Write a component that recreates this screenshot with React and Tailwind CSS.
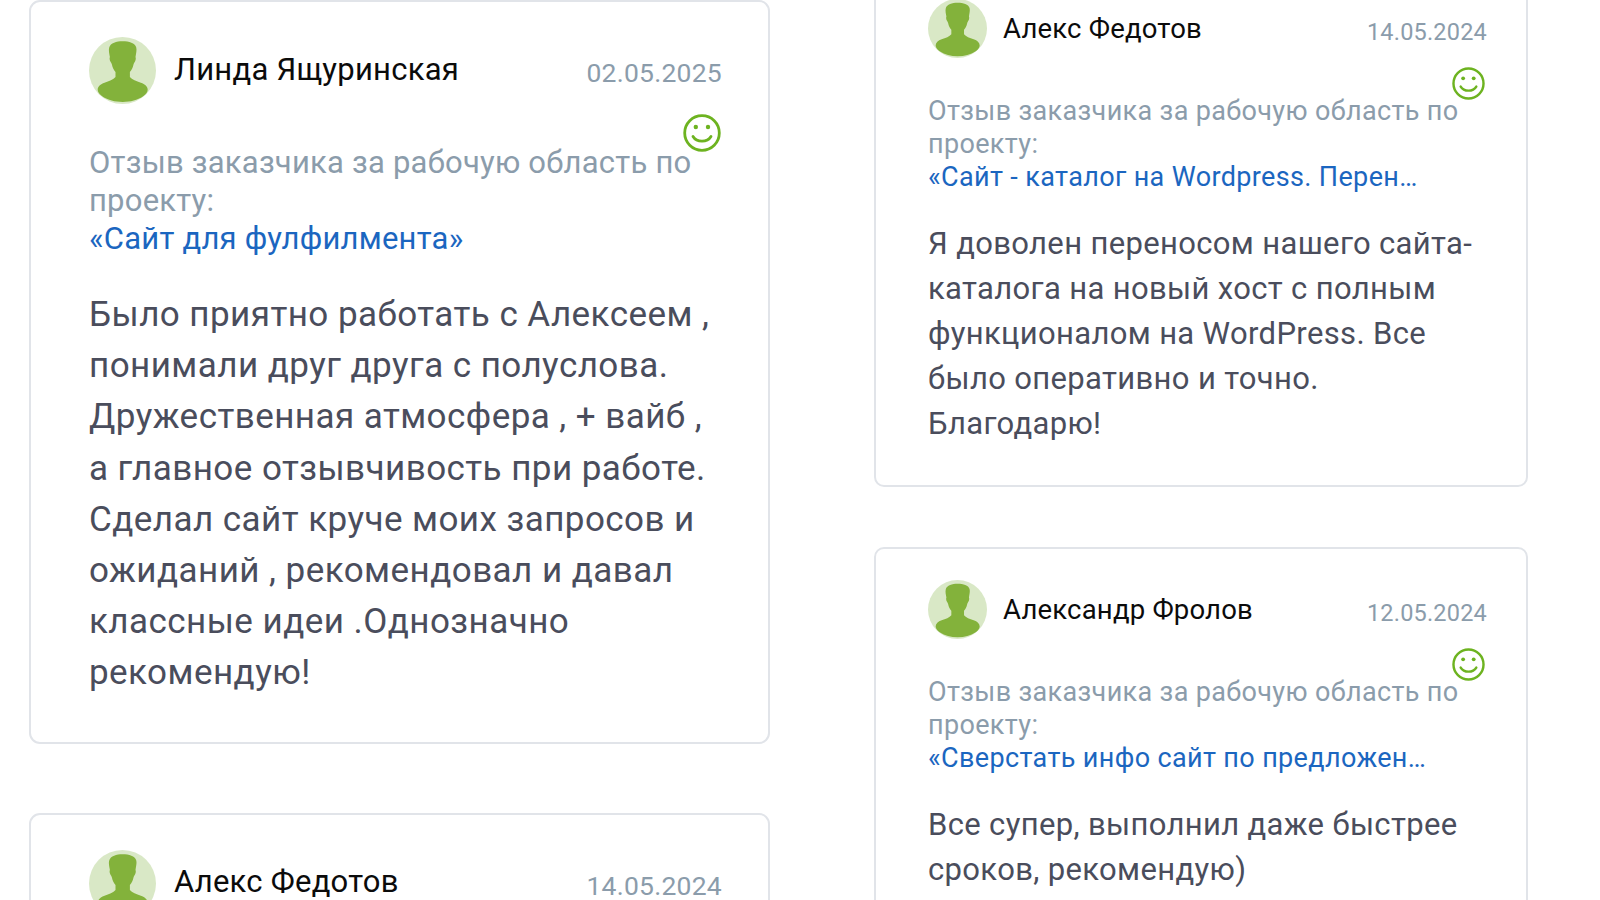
import React from "react";

const FONT = "font-['Roboto',sans-serif]";

function Avatar({ className }) {
  return (
    <svg viewBox="0 0 67 67" className={className}>
      <circle cx="33.5" cy="33.5" r="33.5" fill="#d9e8c6" />
      <path
        fill="#83b23b"
        d="M33.500 4.300c-6 0-12 1.700-13.300 6.200-.8 3 .2 6.500.7 9.500-.5 1-.4 3 .5 4.500.6 1 1 1.600 1.500 3 .6 3 2 5.500 3.600 7.500v5c-2 2.700-6.500 4.200-11 5.800-4 1.500-6.800 3.700-6.800 7 0 2.500 2 4.700 4.500 6.500 6 4 12.500 5.700 20.500 5.700s14.500-1.700 20.500-5.700c2.500-1.800 4.500-4 4.500-6.500 0-3.300-2.800-5.500-6.800-7-4.500-1.600-9-3.100-11-5.800v-5c1.600-2 3-4.500 3.600-7.500.5-1.400.9-2 1.500-3 .9-1.500 1-3.500.5-4.500.5-3.500 1.500-7 .7-9.800-1.300-4.200-6.900-5.900-13.700-5.900z"
      />
    </svg>
  );
}

function Smile({ className }) {
  return (
    <svg viewBox="0 0 38 38" fill="none" className={className}>
      <circle cx="19" cy="19" r="17.300" stroke="#6db320" strokeWidth="2.800" />
      <circle cx="12.800" cy="13" r="2.200" fill="#6db320" />
      <circle cx="25" cy="13" r="2.200" fill="#6db320" />
      <path d="M10 22.500c2 3.300 5.300 4.700 9 4.700s7-1.400 9-4.700" stroke="#6db320" strokeWidth="2.800" strokeLinecap="round" />
    </svg>
  );
}

function LargeCard({ name, date, project, text, className = "" }) {
  return (
    <div className={`relative rounded-[11px] border-2 border-[#e1e4e9] bg-white pl-[58px] pr-[46px] pt-[35px] ${className}`}>
      <div className="flex items-center">
        <Avatar className="w-[67px] h-[67px] shrink-0" />
        <span className="ml-[18px] -mt-[2px] text-[31px] leading-[40px] tracking-[0.25px] text-[#0b0b0b]">{name}</span>
        <span className="ml-auto mt-[5px] text-[26.500px] leading-[34px] tracking-[0.25px] text-[#8b9cab]">{date}</span>
      </div>
      <Smile className="absolute right-[47px] top-[112px] w-[38px] h-[38px]" />
      <div className="mt-[40px] text-[31px] leading-[38px] tracking-[0.22px] text-[#8b9cab]">
        Отзыв заказчика за рабочую область по проекту:
      </div>
      <div className="text-[31px] leading-[37px] tracking-[0.23px] text-[#1b66c0]">{project}</div>
      <div className="mt-[32px] pb-[43px] text-[35px] leading-[51.200px] tracking-[0.45px] text-[#4a4d5c]">{text}</div>
    </div>
  );
}

function SmallCard({ name, date, project, text, className = "" }) {
  return (
    <div className={`relative rounded-[10px] border-2 border-[#e1e4e9] bg-white pl-[52px] pr-[39px] pt-[31px] ${className}`}>
      <div className="flex items-center">
        <Avatar className="w-[59px] h-[59px] shrink-0" />
        <span className="ml-[16px] text-[27.500px] leading-[36px] tracking-[0.2px] text-[#0b0b0b]">{name}</span>
        <span className="ml-auto mt-[6px] text-[23.500px] leading-[30px] tracking-[0.2px] text-[#8b9cab]">{date}</span>
      </div>
      <Smile className="absolute right-[41px] top-[99px] w-[33px] h-[33px]" />
      <div className="mt-[37px] text-[27px] leading-[33px] tracking-[0.35px] text-[#8b9cab]">
        Отзыв заказчика за рабочую область по проекту:
      </div>
      <div className="text-[27px] leading-[33px] tracking-[0.36px] text-[#1b66c0] truncate">{project}</div>
      <div className="mt-[27px] pb-[39px] text-[31px] leading-[45px] tracking-[0.35px] text-[#4a4d5c]">{text}</div>
    </div>
  );
}

export default function App() {
  return (
    <div className={`${FONT} h-[900px] w-[1600px] overflow-hidden bg-white flex`}>
      <div className="w-[741px] ml-[29px] shrink-0 flex flex-col gap-[69px]">
        <LargeCard
          name="Линда Ящуринская"
          date="02.05.2025"
          project="«Сайт для фулфилмента»"
          text="Было приятно работать с Алексеем , понимали друг друга с полуслова. Дружественная атмосфера , + вайб , а главное отзывчивость при работе. Сделал сайт круче моих запросов и ожиданий , рекомендовал и давал классные идеи .Однозначно рекомендую!"
        />
        <LargeCard
          name="Алекс Федотов"
          date="14.05.2024"
          project="«Сайт - каталог на Wordpress. Перен…"
          text="Я доволен переносом нашего сайта-каталога на новый хост с полным функционалом на WordPress."
        />
      </div>
      <div className="w-[654px] ml-[104px] shrink-0 -mt-[34px] flex flex-col gap-[60px]">
        <SmallCard
          name="Алекс Федотов"
          date="14.05.2024"
          project="«Сайт - каталог на Wordpress. Перен…"
          text="Я доволен переносом нашего сайта-каталога на новый хост с полным функционалом на WordPress. Все было оперативно и точно. Благодарю!"
        />
        <SmallCard
          name="Александр Фролов"
          date="12.05.2024"
          project="«Сверстать инфо сайт по предложен…"
          text="Все супер, выполнил даже быстрее сроков, рекомендую)"
        />
      </div>
    </div>
  );
}
